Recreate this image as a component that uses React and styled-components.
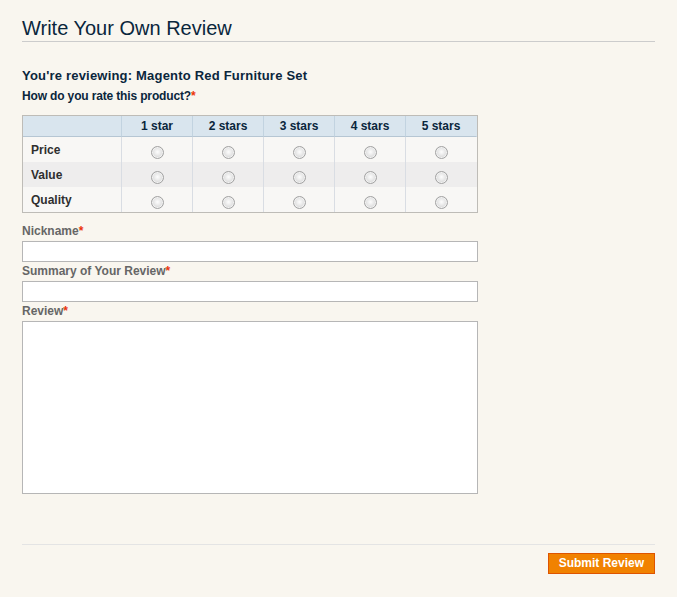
import React from 'react';
import styled, { createGlobalStyle } from 'styled-components';

const GlobalStyle = createGlobalStyle`
  html, body {
    margin: 0;
    padding: 0;
    background: #f9f6ef;
  }
  body {
    font-family: "Liberation Sans", Arial, sans-serif;
    font-size: 12px;
    color: #2f2f2f;
  }
`;

const Page = styled.div`
  width: 633px;
  padding: 16px 22px 20px;
`;

const PageTitle = styled.h1`
  margin: 0 0 26px;
  padding-bottom: 1px;
  border-bottom: 1px solid #ccc;
  font-size: 20px;
  line-height: 24px;
  font-weight: normal;
  color: #0a263c;
`;

const ProductHeading = styled.h3`
  margin: 0 0 5px;
  font-size: 13px;
  line-height: 16px;
  font-weight: bold;
  letter-spacing: 0.2px;
  color: #0a263c;
`;

const RateHeading = styled.h4`
  margin: 0 0 11px;
  font-size: 12px;
  line-height: 15px;
  font-weight: bold;
  letter-spacing: -0.15px;
  color: #0a263c;
`;

const Required = styled.em`
  color: #eb340a;
  font-style: normal;
  font-weight: bold;
  letter-spacing: 0;
`;

const RatingTable = styled.table`
  width: 456px;
  border-collapse: separate;
  border-spacing: 0;
  border: 1px solid #bebcb7;
  table-layout: fixed;
  margin-bottom: 11px;
`;

const Col = styled.col`
  width: ${(p) => p.$w};
`;

const HeadCell = styled.th`
  background: #d9e5ee;
  border-right: 1px solid ${(p) => (p.$last ? 'transparent' : '#c2d3e0')};
  border-bottom: 1px solid #b6c6d3;
  padding: 2px 8px;
  height: 16px;
  line-height: 16px;
  font-size: 12px;
  font-weight: bold;
  color: #0a263c;
  text-align: center;
  white-space: nowrap;
`;

const BodyRow = styled.tr`
  height: 25px;
  background: ${(p) => (p.$even ? '#eeeded' : '#f8f7f5')};
`;

const RowLabel = styled.th`
  border-right: 1px solid #d9dde3;
  padding: 1px 8px 0;
  text-align: left;
  font-size: 12px;
  font-weight: bold;
  color: #2f2f2f;
  vertical-align: middle;
`;

const RadioCell = styled.td`
  border-right: 1px solid ${(p) => (p.$last ? 'transparent' : '#d9dde3')};
  padding: 0;
  text-align: center;
  vertical-align: middle;
`;

const Radio = styled.input.attrs({ type: 'radio' })`
  appearance: none;
  -webkit-appearance: none;
  display: block;
  width: 13px;
  height: 13px;
  margin: 5px auto 0;
  border-radius: 50%;
  border: 1px solid #a2a2a2;
  box-sizing: border-box;
  background: radial-gradient(circle at 50% 45%, #fdfdfd 0%, #ececec 35%, #d2d2d2 80%, #c4c4c4 100%);
  box-shadow: inset 0 0 0 1px #f2f2f2;
`;

const Field = styled.div`
  display: flex;
  flex-direction: column;
  margin-bottom: 2px;
`;

const FieldLabel = styled.label`
  display: block;
  color: #666;
  font-weight: bold;
  font-size: 12px;
  line-height: 15px;
  margin-bottom: 2px;
`;

const TextInput = styled.input`
  display: block;
  width: 456px;
  height: 21px;
  box-sizing: border-box;
  margin: 0;
  padding: 2px;
  border: 1px solid #b6b6b6;
  background: #fff;
  font: 12px "Liberation Sans", Arial, sans-serif;
`;

const TextArea = styled.textarea`
  display: block;
  width: 456px;
  height: 173px;
  box-sizing: border-box;
  margin: 0;
  padding: 2px;
  border: 1px solid #b6b6b6;
  background: #fff;
  resize: none;
  font: 12px "Liberation Sans", Arial, sans-serif;
`;

const ButtonsSet = styled.div`
  margin-top: 50px;
  border-top: 1px solid #e4e4e4;
  padding-top: 8px;
  display: flex;
  justify-content: flex-end;
`;

const SubmitButton = styled.button`
  height: 21px;
  padding: 0 10px;
  border: 1px solid #de5400;
  background: #f18200;
  color: #fff;
  font: bold 12px/19px "Liberation Sans", Arial, sans-serif;
  cursor: pointer;
`;

const columns = ['1 star', '2 stars', '3 stars', '4 stars', '5 stars'];
const criteria = ['Price', 'Value', 'Quality'];

export default function App() {
  return (
    <>
      <GlobalStyle />
      <Page>
        <PageTitle>Write Your Own Review</PageTitle>
        <form onSubmit={(e) => e.preventDefault()}>
          <ProductHeading>You're reviewing: Magento Red Furniture Set</ProductHeading>
          <RateHeading>
            How do you rate this product?<Required>*</Required>
          </RateHeading>
          <RatingTable>
            <colgroup>
              <Col $w="99px" />
              {columns.map((c) => (
                <Col key={c} $w="auto" />
              ))}
            </colgroup>
            <thead>
              <tr>
                <HeadCell>&nbsp;</HeadCell>
                {columns.map((c, i) => (
                  <HeadCell key={c} $last={i === columns.length - 1}>
                    {c}
                  </HeadCell>
                ))}
              </tr>
            </thead>
            <tbody>
              {criteria.map((name, r) => (
                <BodyRow key={name} $even={r % 2 === 1}>
                  <RowLabel>{name}</RowLabel>
                  {columns.map((c, i) => (
                    <RadioCell key={c} $last={i === columns.length - 1}>
                      <Radio name={`rating-${name}`} value={i + 1} />
                    </RadioCell>
                  ))}
                </BodyRow>
              ))}
            </tbody>
          </RatingTable>
          <Field>
            <FieldLabel htmlFor="nickname">
              Nickname<Required>*</Required>
            </FieldLabel>
            <TextInput id="nickname" type="text" />
          </Field>
          <Field>
            <FieldLabel htmlFor="summary">
              Summary of Your Review<Required>*</Required>
            </FieldLabel>
            <TextInput id="summary" type="text" />
          </Field>
          <Field>
            <FieldLabel htmlFor="review">
              Review<Required>*</Required>
            </FieldLabel>
            <TextArea id="review" />
          </Field>
          <ButtonsSet>
            <SubmitButton type="submit">Submit Review</SubmitButton>
          </ButtonsSet>
        </form>
      </Page>
    </>
  );
}
